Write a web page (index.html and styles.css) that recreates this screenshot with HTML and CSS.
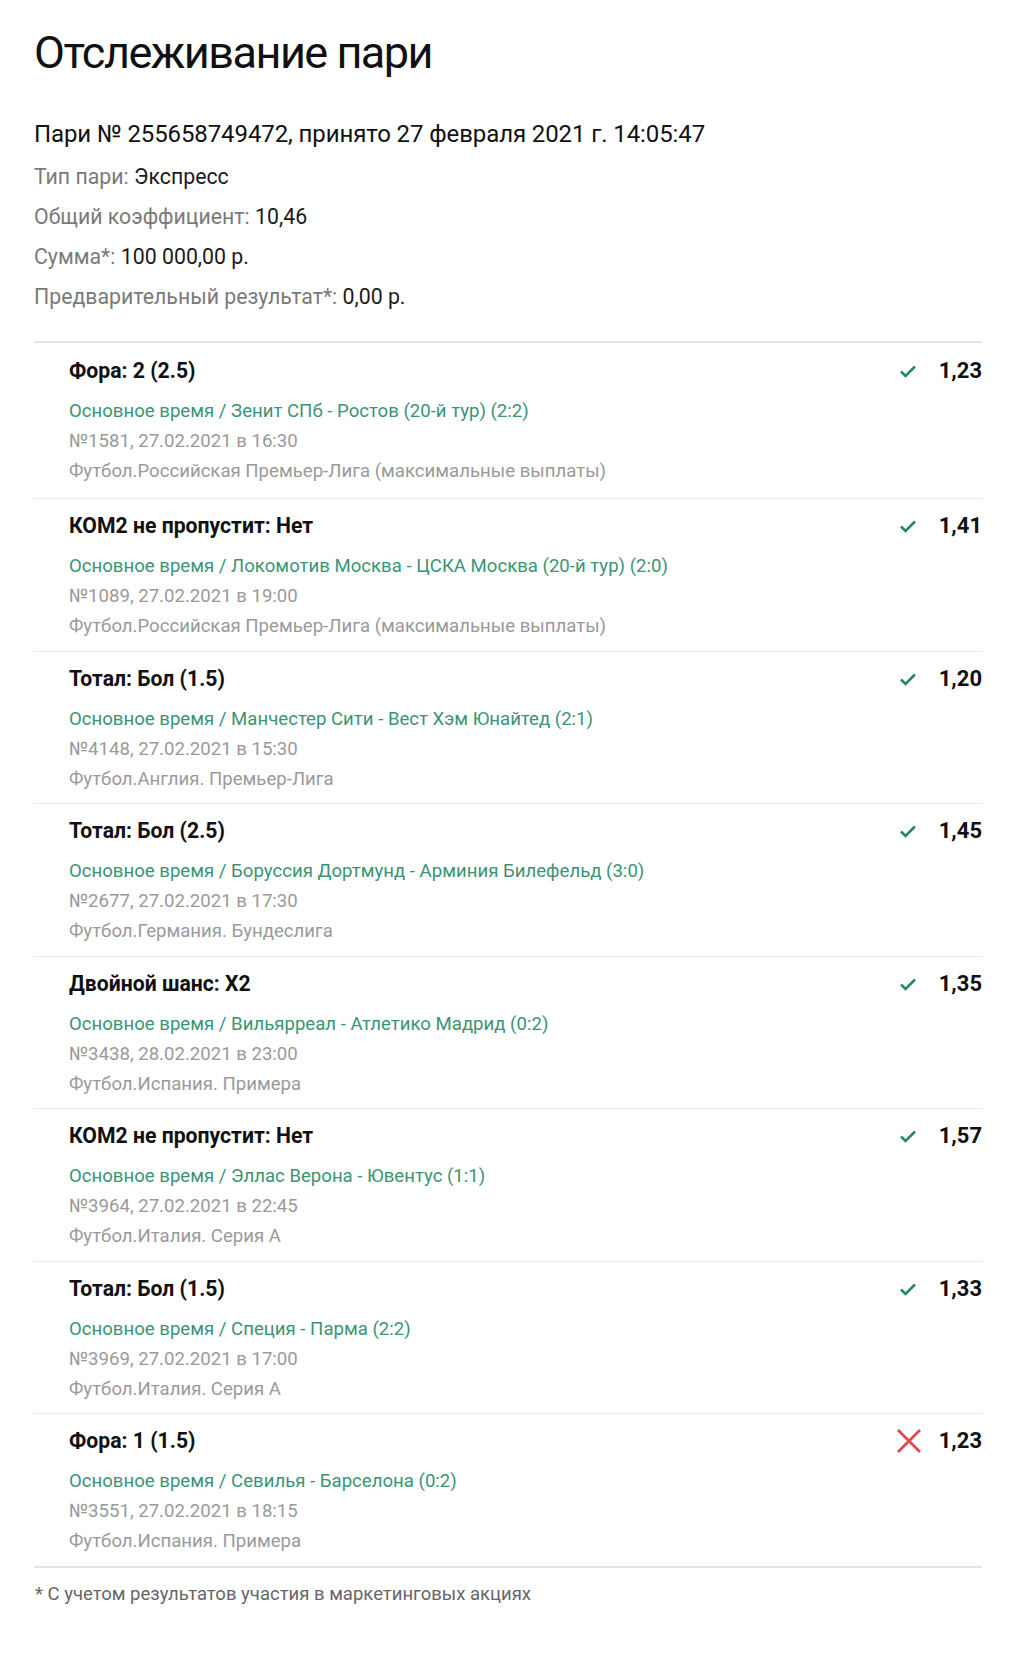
FILE: index.html
```html
<!DOCTYPE html>
<html lang="ru">
<head>
<meta charset="utf-8">
<title>Отслеживание пари</title>
<link rel="stylesheet" href="styles.css">
</head>
<body>
<div class="page">
  <h1 class="title">Отслеживание пари</h1>
  <p class="bet-head">Пари № 255658749472, принято 27 февраля 2021 г. 14:05:47</p>
  <div class="details">
    <div class="detail"><span class="label">Тип пари:</span> <span class="value">Экспресс</span></div>
    <div class="detail"><span class="label">Общий коэффициент:</span> <span class="value">10,46</span></div>
    <div class="detail"><span class="label">Сумма*:</span> <span class="value">100 000,00 р.</span></div>
    <div class="detail"><span class="label">Предварительный результат*:</span> <span class="value">0,00 р.</span></div>
  </div>

  <div class="events">
    <div class="event">
      <div class="info">
        <div class="market">Фора: 2 (2.5)</div>
        <div class="match">Основное время / Зенит СПб - Ростов (20-й тур) (2:2)</div>
        <div class="meta">№1581, 27.02.2021 в 16:30</div>
        <div class="meta">Футбол.Российская Премьер-Лига (максимальные выплаты)</div>
      </div>
      <div class="result">
        <svg class="ic-win" width="18" height="14" viewBox="0 0 18 14"><polyline points="2,7.5 6.5,12 16,2.5" fill="none" stroke="#23876a" stroke-width="2.6"/></svg>
        <span class="odds">1,23</span>
      </div>
    </div>
    <div class="event">
      <div class="info">
        <div class="market">КОМ2 не пропустит: Нет</div>
        <div class="match">Основное время / Локомотив Москва - ЦСКА Москва (20-й тур) (2:0)</div>
        <div class="meta">№1089, 27.02.2021 в 19:00</div>
        <div class="meta">Футбол.Российская Премьер-Лига (максимальные выплаты)</div>
      </div>
      <div class="result">
        <svg class="ic-win" width="18" height="14" viewBox="0 0 18 14"><polyline points="2,7.5 6.5,12 16,2.5" fill="none" stroke="#23876a" stroke-width="2.6"/></svg>
        <span class="odds">1,41</span>
      </div>
    </div>
    <div class="event">
      <div class="info">
        <div class="market">Тотал: Бол (1.5)</div>
        <div class="match">Основное время / Манчестер Сити - Вест Хэм Юнайтед (2:1)</div>
        <div class="meta">№4148, 27.02.2021 в 15:30</div>
        <div class="meta">Футбол.Англия. Премьер-Лига</div>
      </div>
      <div class="result">
        <svg class="ic-win" width="18" height="14" viewBox="0 0 18 14"><polyline points="2,7.5 6.5,12 16,2.5" fill="none" stroke="#23876a" stroke-width="2.6"/></svg>
        <span class="odds">1,20</span>
      </div>
    </div>
    <div class="event">
      <div class="info">
        <div class="market">Тотал: Бол (2.5)</div>
        <div class="match">Основное время / Боруссия Дортмунд - Арминия Билефельд (3:0)</div>
        <div class="meta">№2677, 27.02.2021 в 17:30</div>
        <div class="meta">Футбол.Германия. Бундеслига</div>
      </div>
      <div class="result">
        <svg class="ic-win" width="18" height="14" viewBox="0 0 18 14"><polyline points="2,7.5 6.5,12 16,2.5" fill="none" stroke="#23876a" stroke-width="2.6"/></svg>
        <span class="odds">1,45</span>
      </div>
    </div>
    <div class="event">
      <div class="info">
        <div class="market">Двойной шанс: X2</div>
        <div class="match">Основное время / Вильярреал - Атлетико Мадрид (0:2)</div>
        <div class="meta">№3438, 28.02.2021 в 23:00</div>
        <div class="meta">Футбол.Испания. Примера</div>
      </div>
      <div class="result">
        <svg class="ic-win" width="18" height="14" viewBox="0 0 18 14"><polyline points="2,7.5 6.5,12 16,2.5" fill="none" stroke="#23876a" stroke-width="2.6"/></svg>
        <span class="odds">1,35</span>
      </div>
    </div>
    <div class="event">
      <div class="info">
        <div class="market">КОМ2 не пропустит: Нет</div>
        <div class="match">Основное время / Эллас Верона - Ювентус (1:1)</div>
        <div class="meta">№3964, 27.02.2021 в 22:45</div>
        <div class="meta">Футбол.Италия. Серия А</div>
      </div>
      <div class="result">
        <svg class="ic-win" width="18" height="14" viewBox="0 0 18 14"><polyline points="2,7.5 6.5,12 16,2.5" fill="none" stroke="#23876a" stroke-width="2.6"/></svg>
        <span class="odds">1,57</span>
      </div>
    </div>
    <div class="event">
      <div class="info">
        <div class="market">Тотал: Бол (1.5)</div>
        <div class="match">Основное время / Специя - Парма (2:2)</div>
        <div class="meta">№3969, 27.02.2021 в 17:00</div>
        <div class="meta">Футбол.Италия. Серия А</div>
      </div>
      <div class="result">
        <svg class="ic-win" width="18" height="14" viewBox="0 0 18 14"><polyline points="2,7.5 6.5,12 16,2.5" fill="none" stroke="#23876a" stroke-width="2.6"/></svg>
        <span class="odds">1,33</span>
      </div>
    </div>
    <div class="event">
      <div class="info">
        <div class="market">Фора: 1 (1.5)</div>
        <div class="match">Основное время / Севилья - Барселона (0:2)</div>
        <div class="meta">№3551, 27.02.2021 в 18:15</div>
        <div class="meta">Футбол.Испания. Примера</div>
      </div>
      <div class="result">
        <svg class="ic-lose" width="26" height="26" viewBox="0 0 26 26"><path d="M2 2 L24 24 M24 2 L2 24" fill="none" stroke="#e0484f" stroke-width="2.8"/></svg>
        <span class="odds">1,23</span>
      </div>
    </div>
  </div>

  <p class="note">* С учетом результатов участия в маркетинговых акциях</p>
</div>
</body>
</html>
```

FILE: styles.css
```css
html, body {
  margin: 0;
  padding: 0;
  background: #ffffff;
}

body {
  font-family: Roboto, "Noto Sans", "Liberation Sans", sans-serif;
  color: #1a1a1a;
}

.page {
  padding: 25px 34px 40px 34px;
}

.title {
  margin: 0;
  font-size: 45px;
  line-height: 56px;
  font-weight: 400;
  letter-spacing: -1.5px;
  color: #111111;
}

.bet-head {
  margin: 37px 0 0 0;
  font-size: 24px;
  line-height: 32px;
  letter-spacing: -0.1px;
  color: #111111;
}

.details {
  margin-top: 7px;
}

.detail {
  font-size: 21.3px;
  line-height: 40px;
}

.label {
  color: #7a7a7a;
}

.value {
  color: #1a1a1a;
}

.events {
  margin-top: 24px;
  border-top: 2px solid #e6e6e6;
  border-bottom: 2px solid #e3e3e3;
}

.event {
  display: flex;
  justify-content: space-between;
  align-items: flex-start;
  padding: 12px 0 9.5px 35px;
  border-top: 1px solid #ebebeb;
}

.event:first-child {
  border-top: none;
  padding-top: 13px;
  padding-bottom: 12px;
}

.info {
  display: flex;
  flex-direction: column;
}

.market {
  font-size: 21.2px;
  line-height: 30px;
  font-weight: 700;
  color: #111111;
  margin-bottom: 10px;
}

.match {
  font-size: 18.6px;
  line-height: 30px;
  color: #3b9474;
}

.meta {
  font-size: 18.6px;
  line-height: 30px;
  color: #9a9a9a;
}

.result {
  display: flex;
  align-items: center;
  height: 30px;
}

.ic-win {
  display: block;
  margin-right: 22px;
}

.ic-lose {
  display: block;
  margin-right: 17px;
}

.odds {
  font-size: 22px;
  line-height: 30px;
  font-weight: 700;
  color: #111111;
}

.note {
  margin: 14px 0 0 1px;
  font-size: 18.5px;
  line-height: 24px;
  color: #666666;
}
```
